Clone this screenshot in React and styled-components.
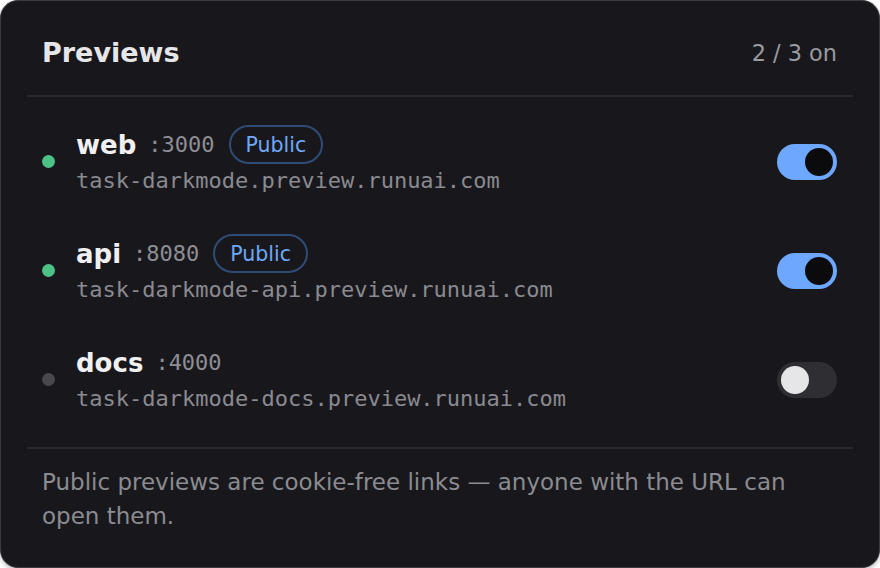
import React from "react";
import styled, { createGlobalStyle } from "styled-components";

const Global = createGlobalStyle`
  html, body {
    margin: 0;
    padding: 0;
    background: #ffffff;
  }
  * { box-sizing: border-box; }
`;

const Card = styled.div`
  width: 880px;
  height: 568px;
  background: #18181c;
  border: 1px solid #3a3a3f;
  border-radius: 18px;
  padding: 0 26px;
  font-family: "DejaVu Sans", sans-serif;
  box-shadow: 0 2px 4px rgba(0, 0, 0, 0.25);
  overflow: hidden;
`;

const Header = styled.div`
  display: flex;
  align-items: center;
  justify-content: space-between;
  padding: 35px 16px 26px 15px;
  border-bottom: 2px solid #27272c;
`;

const Title = styled.h2`
  margin: 0;
  font-size: 27px;
  line-height: 33px;
  font-weight: 700;
  color: #e6e6e9;
`;

const Count = styled.span`
  font-size: 22.4px;
  color: #9a9aa0;
`;

const List = styled.div`
  padding: 10px 16px 13px 15px;
  border-bottom: 2px solid #27272c;
`;

const Row = styled.div`
  height: 109px;
  display: flex;
  align-items: center;
  gap: 21px;
`;

const Dot = styled.span`
  width: 13px;
  height: 13px;
  border-radius: 50%;
  flex-shrink: 0;
  background: ${(p) => (p.$on ? "#4cc286" : "#48484d")};
`;

const Info = styled.div`
  flex: 1;
  display: flex;
  flex-direction: column;
`;

const NameLine = styled.div`
  height: 39px;
  display: flex;
  align-items: center;
  gap: 12px;
`;

const Name = styled.span`
  font-size: 26px;
  font-weight: 700;
  color: #f0f0f2;
`;

const Port = styled.span`
  font-family: "DejaVu Sans Mono", monospace;
  font-size: 22px;
  color: #8e8e94;
`;

const Badge = styled.span`
  margin-left: 2px;
  height: 39px;
  display: inline-flex;
  align-items: center;
  padding: 0 15px;
  border: 2px solid #2f4c76;
  border-radius: 20px;
  font-size: 20.5px;
  color: #6ea8f7;
`;

const Url = styled.div`
  font-family: "DejaVu Sans Mono", monospace;
  font-size: 22px;
  line-height: 34px;
  color: #8a8a90;
`;

const Toggle = styled.span`
  width: 60px;
  height: 36px;
  border-radius: 18px;
  flex-shrink: 0;
  display: flex;
  align-items: center;
  padding: 0 4px;
  justify-content: ${(p) => (p.$on ? "flex-end" : "flex-start")};
  background: ${(p) => (p.$on ? "#6ea8fe" : "#2e2e33")};
`;

const Knob = styled.span`
  width: 28px;
  height: 28px;
  border-radius: 50%;
  background: ${(p) => (p.$on ? "#0b0b0d" : "#e6e6e9")};
`;

const Footer = styled.p`
  margin: 0;
  padding: 16px 16px 18px 15px;
  font-size: 23px;
  line-height: 34px;
  color: #8b8b91;
`;

const previews = [
  { name: "web", port: 3000, url: "task-darkmode.preview.runuai.com", on: true, pub: true },
  { name: "api", port: 8080, url: "task-darkmode-api.preview.runuai.com", on: true, pub: true },
  { name: "docs", port: 4000, url: "task-darkmode-docs.preview.runuai.com", on: false, pub: false },
];

export default function App() {
  const onCount = previews.filter((p) => p.on).length;
  return (
    <>
      <Global />
      <Card>
        <Header>
          <Title>Previews</Title>
          <Count>
            {onCount} / {previews.length} on
          </Count>
        </Header>
        <List>
          {previews.map((p) => (
            <Row key={p.name}>
              <Dot $on={p.on} />
              <Info>
                <NameLine>
                  <Name>{p.name}</Name>
                  <Port>:{p.port}</Port>
                  {p.pub && <Badge>Public</Badge>}
                </NameLine>
                <Url>{p.url}</Url>
              </Info>
              <Toggle $on={p.on}>
                <Knob $on={p.on} />
              </Toggle>
            </Row>
          ))}
        </List>
        <Footer>
          Public previews are cookie-free links — anyone with the URL can open them.
        </Footer>
      </Card>
    </>
  );
}
